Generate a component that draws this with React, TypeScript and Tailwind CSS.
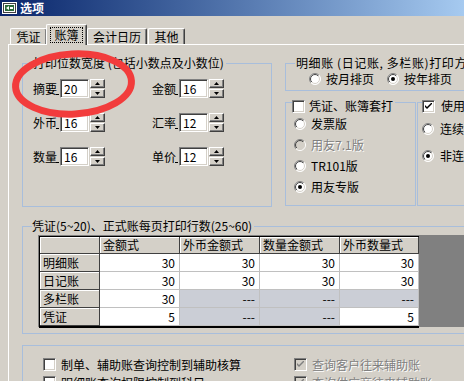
import React from "react";

const groupBorder = "border border-[#a8bedc]";

function AppIcon() {
  return (
    <svg width="15" height="12" viewBox="0 0 15 12" className="shrink-0">
      <rect x="0.5" y="0.5" width="14" height="11" fill="#d4d0c8" stroke="#ffffff" />
      <rect x="1.5" y="1.5" width="12" height="9" fill="#ffffff" stroke="#404040" />
      <rect x="3" y="3" width="9" height="6" fill="#2c6b3a" />
      <path d="M4 6 L7 4 L7 8 Z" fill="#ffffff" />
      <rect x="8" y="5" width="3" height="2" fill="#ffffff" />
    </svg>
  );
}

function Radio({ checked = false, disabled = false }: { checked?: boolean; disabled?: boolean }) {
  return (
    <svg width="12" height="12" viewBox="0 0 12 12" className="shrink-0">
      <defs>
        <linearGradient id="rOuter" x1="0" y1="0" x2="1" y2="1">
          <stop offset="0.5" stopColor="#808080" />
          <stop offset="0.5" stopColor="#ffffff" />
        </linearGradient>
        <linearGradient id="rInner" x1="0" y1="0" x2="1" y2="1">
          <stop offset="0.5" stopColor="#404040" />
          <stop offset="0.5" stopColor="#d4d0c8" />
        </linearGradient>
      </defs>
      <circle cx="6" cy="6" r="5.5" fill={disabled ? "#d4d0c8" : "#ffffff"} stroke="url(#rOuter)" />
      <circle cx="6" cy="6" r="4.5" fill="none" stroke="url(#rInner)" />
      {checked && <circle cx="6" cy="6" r="2" fill="#000000" />}
    </svg>
  );
}

function Check({ checked = false, disabled = false }: { checked?: boolean; disabled?: boolean }) {
  return (
    <span
      className={`shrink-0 flex items-center justify-center w-[13px] h-[13px] border border-t-[#808080] border-l-[#808080] border-b-white border-r-white shadow-[inset_1px_1px_0_#404040,inset_-1px_-1px_0_#d4d0c8] ${
        disabled ? "bg-[#d4d0c8]" : "bg-white"
      }`}
    >
      {checked && (
        <svg width="7" height="7" viewBox="0 0 7 7">
          <path d="M0 2 L2 4 L7 -1 L7 1 L2 6 L0 4 Z" fill={disabled ? "#808080" : "#000000"} />
        </svg>
      )}
    </span>
  );
}

function SpinButton({ up }: { up: boolean }) {
  return (
    <span className="flex items-center justify-center w-[15px] h-[9px] bg-[#d4d0c8] border border-t-white border-l-white border-r-[#404040] border-b-[#404040] shadow-[inset_-1px_-1px_0_#808080]">
      <svg width="5" height="3" viewBox="0 0 5 3">
        <path d={up ? "M2.5 0 L5 3 L0 3 Z" : "M0 0 L5 0 L2.5 3 Z"} fill="#000000" />
      </svg>
    </span>
  );
}

function Field({ label, value }: { label: string; value: string }) {
  return (
    <div className="flex items-center h-[19px]">
      <span className="w-[27px] shrink-0 relative">
        {label}
        <span className="absolute right-[1px] bottom-[1px] w-[3px] h-px bg-black" />
      </span>
      <span className="w-[29px] h-[19px] shrink-0 flex items-center pl-[3px] bg-white border border-t-[#808080] border-l-[#808080] border-b-white border-r-white shadow-[inset_1px_1px_0_#404040,inset_-1px_-1px_0_#d4d0c8]">
        {value}
      </span>
      <span className="ml-[1px] flex flex-col gap-px">
        <SpinButton up />
        <SpinButton up={false} />
      </span>
    </div>
  );
}

type Cell = { v: string; off?: boolean };

const rows: { name: string; cells: Cell[] }[] = [
  { name: "明细账", cells: [{ v: "30" }, { v: "30" }, { v: "30" }, { v: "30" }] },
  { name: "日记账", cells: [{ v: "30" }, { v: "30" }, { v: "30" }, { v: "30" }] },
  {
    name: "多栏账",
    cells: [{ v: "30" }, { v: "---", off: true }, { v: "---", off: true }, { v: "---", off: true }],
  },
  {
    name: "凭证",
    cells: [{ v: "5" }, { v: "---", off: true }, { v: "---", off: true }, { v: "5" }],
  },
];

const heads = ["金额式", "外币金额式", "数量金额式", "外币数量式"];

const disabledText = "text-[#808080] [text-shadow:1px_1px_0_#ffffff]";

export default function App() {
  return (
    <div className="relative w-[464px] h-[381px] overflow-hidden bg-[#d4d0c8] text-[12px] leading-[14px] text-black font-['Noto_Sans_CJK_SC',sans-serif]">
      {/* title bar */}
      <div className="h-[16px] flex items-center gap-[3px] pl-[2px] bg-linear-to-r from-[#0a246a] to-[#a6caf0]">
        <AppIcon />
        <span className="text-white font-bold text-[12px] leading-[16px]">选项</span>
      </div>

      {/* tabs */}
      <div className="h-[28px] flex items-end pl-[10px]">
        <div className="w-[37px] h-[16px] flex items-center justify-center border-t border-l border-white border-r border-r-[#404040] rounded-t-[2px] shadow-[inset_-1px_0_0_#808080]">
          凭证
        </div>
        <div className="relative z-10 -mb-px w-[41px] h-[21px] -ml-px flex items-start justify-center pt-[2px] bg-[#d4d0c8] border-t border-l border-white border-r border-r-[#404040] rounded-t-[2px] shadow-[inset_-1px_0_0_#808080]">
          <span className="px-[4px] py-px outline outline-1 outline-dotted outline-black -outline-offset-1">账簿</span>
        </div>
        <div className="w-[60px] h-[16px] flex items-center justify-center border-t border-l border-white border-r border-r-[#404040] rounded-t-[2px] shadow-[inset_-1px_0_0_#808080]">
          会计日历
        </div>
        <div className="ml-px w-[37px] h-[16px] flex items-center justify-center border-t border-l border-white border-r border-r-[#404040] rounded-t-[2px] shadow-[inset_-1px_0_0_#808080]">
          其他
        </div>
      </div>

      {/* panel */}
      <div className="ml-[8px] w-[520px] h-[340px] border-t border-l border-white pl-[13px] pt-[18px]">
        <div className="flex items-start">
          {/* print widths */}
          <div className={`relative shrink-0 w-[250px] h-[144px] ${groupBorder} pl-[10px] pt-[15px]`}>
            <span className="absolute left-[10px] -top-[8px] bg-[#d4d0c8] pr-[2px] whitespace-nowrap">
              打印位数宽度 (包括小数点及小数位)
            </span>
            <div className="grid grid-cols-[119px_auto] gap-y-[15px]">
              <Field label="摘要" value="20" />
              <Field label="金额" value="16" />
              <Field label="外币" value="16" />
              <Field label="汇率" value="12" />
              <Field label="数量" value="16" />
              <Field label="单价" value="12" />
            </div>
          </div>

          <div className="shrink-0 ml-[13px] w-[300px]">
            <div className={`relative w-[250px] h-[28px] ${groupBorder} flex items-start pl-[23px] pt-[9px]`}>
              <span className="absolute left-[9px] -top-[8px] bg-[#d4d0c8] px-[1px] whitespace-nowrap tracking-[0.6px]">
                明细账 (日记账, 多栏账)打印方式
              </span>
              <div className="h-[12px] flex items-center gap-[5px]">
                <Radio />
                <span>按月排页</span>
              </div>
              <div className="h-[12px] flex items-center gap-[5px] ml-[13px]">
                <Radio checked />
                <span>按年排页</span>
              </div>
            </div>

            <div className="flex mt-[11px]">
              <div className={`relative shrink-0 w-[131px] h-[104px] ${groupBorder} pl-[8px] pt-[15px]`}>
                <div className="absolute left-[6px] -top-[4px] flex items-center gap-[4px] bg-[#d4d0c8] pr-[2px]">
                  <Check />
                  <span>凭证、账簿套打</span>
                </div>
                <div className="flex flex-col gap-[9px]">
                  <div className="h-[12px] flex items-center gap-[5px]">
                    <Radio />
                    <span>发票版</span>
                  </div>
                  <div className="h-[12px] flex items-center gap-[5px]">
                    <Radio disabled />
                    <span className={disabledText}>用友7.1版</span>
                  </div>
                  <div className="h-[12px] flex items-center gap-[5px]">
                    <Radio />
                    <span>TR101版</span>
                  </div>
                  <div className="h-[12px] flex items-center gap-[5px]">
                    <Radio checked />
                    <span>用友专版</span>
                  </div>
                </div>
              </div>

              <div className={`relative shrink-0 ml-px w-[120px] h-[104px] ${groupBorder} pl-[4px] pt-[20px]`}>
                <div className="absolute left-[4px] -top-[4px] flex items-center gap-[6px] bg-[#d4d0c8] pr-[2px] whitespace-nowrap">
                  <Check checked />
                  <span>使用套打纸</span>
                </div>
                <div className="flex flex-col gap-[15px] whitespace-nowrap">
                  <div className="h-[12px] flex items-center gap-[6px]">
                    <Radio />
                    <span>连续打印</span>
                  </div>
                  <div className="h-[12px] flex items-center gap-[6px]">
                    <Radio checked />
                    <span>非连续打印</span>
                  </div>
                </div>
              </div>
            </div>
          </div>
        </div>

        {/* rows per page */}
        <div className={`relative mt-[19px] w-[470px] h-[108px] ${groupBorder} pl-[15px] pt-[8px]`}>
          <span className="absolute left-[9px] -top-[8px] bg-[#d4d0c8] pr-[2px] whitespace-nowrap">
            凭证(5~20)、正式账每页打印行数(25~60)
          </span>
          <div className="flex h-[92px] bg-[#808080] border-t border-l border-[#808080]">
            <div className="shrink-0 grid grid-cols-[60px_80px_80px_80px_79px] grid-rows-[17px_18px_18px_18px_18px] self-start border-t border-l border-black border-b-2 border-b-black bg-white">
              <div className="bg-[#d4d0c8] border-r border-b border-[#404040] shadow-[inset_1px_1px_0_#ffffff]" />
              {heads.map((h) => (
                <div
                  key={h}
                  className="bg-[#d4d0c8] border-r border-b border-[#404040] shadow-[inset_1px_1px_0_#ffffff] pl-[3px] flex items-center"
                >
                  {h}
                </div>
              ))}
              {rows.map((r) => (
                <React.Fragment key={r.name}>
                  <div className="bg-[#d4d0c8] border-r border-b border-[#404040] shadow-[inset_1px_1px_0_#ffffff] pl-[3px] flex items-center">
                    {r.name}
                  </div>
                  {r.cells.map((c, i) => (
                    <div
                      key={i}
                      className={`border-r border-b border-[#c0c0c0] pr-[4px] flex items-center justify-end ${
                        c.off ? "bg-[#cbced6]" : "bg-white"
                      }`}
                    >
                      {c.v}
                    </div>
                  ))}
                </React.Fragment>
              ))}
            </div>
          </div>
        </div>

        {/* query options */}
        <div className={`mt-[11px] w-[470px] h-[60px] ${groupBorder} pl-[20px] pt-[12px]`}>
          <div className="grid grid-cols-[251px_auto] gap-y-[5px] whitespace-nowrap">
            <div className="h-[13px] flex items-center gap-[5px]">
              <Check />
              <span>制单、辅助账查询控制到辅助核算</span>
            </div>
            <div className="h-[13px] flex items-center gap-[5px]">
              <Check checked disabled />
              <span className={disabledText}>查询客户往来辅助账</span>
            </div>
            <div className="h-[13px] flex items-center gap-[5px]">
              <Check />
              <span>明细账查询权限控制到科目</span>
            </div>
            <div className="h-[13px] flex items-center gap-[5px]">
              <Check checked disabled />
              <span className={disabledText}>查询供应商往来辅助账</span>
            </div>
          </div>
        </div>
      </div>

      {/* red annotation ring */}
      <svg className="absolute left-0 top-0 pointer-events-none" width="160" height="140" viewBox="0 0 160 140">
        <ellipse
          cx="73.5"
          cy="84"
          rx="58"
          ry="30"
          fill="none"
          stroke="#f23c3c"
          strokeWidth="7"
          transform="rotate(-3 73.5 84)"
        />
      </svg>
    </div>
  );
}
